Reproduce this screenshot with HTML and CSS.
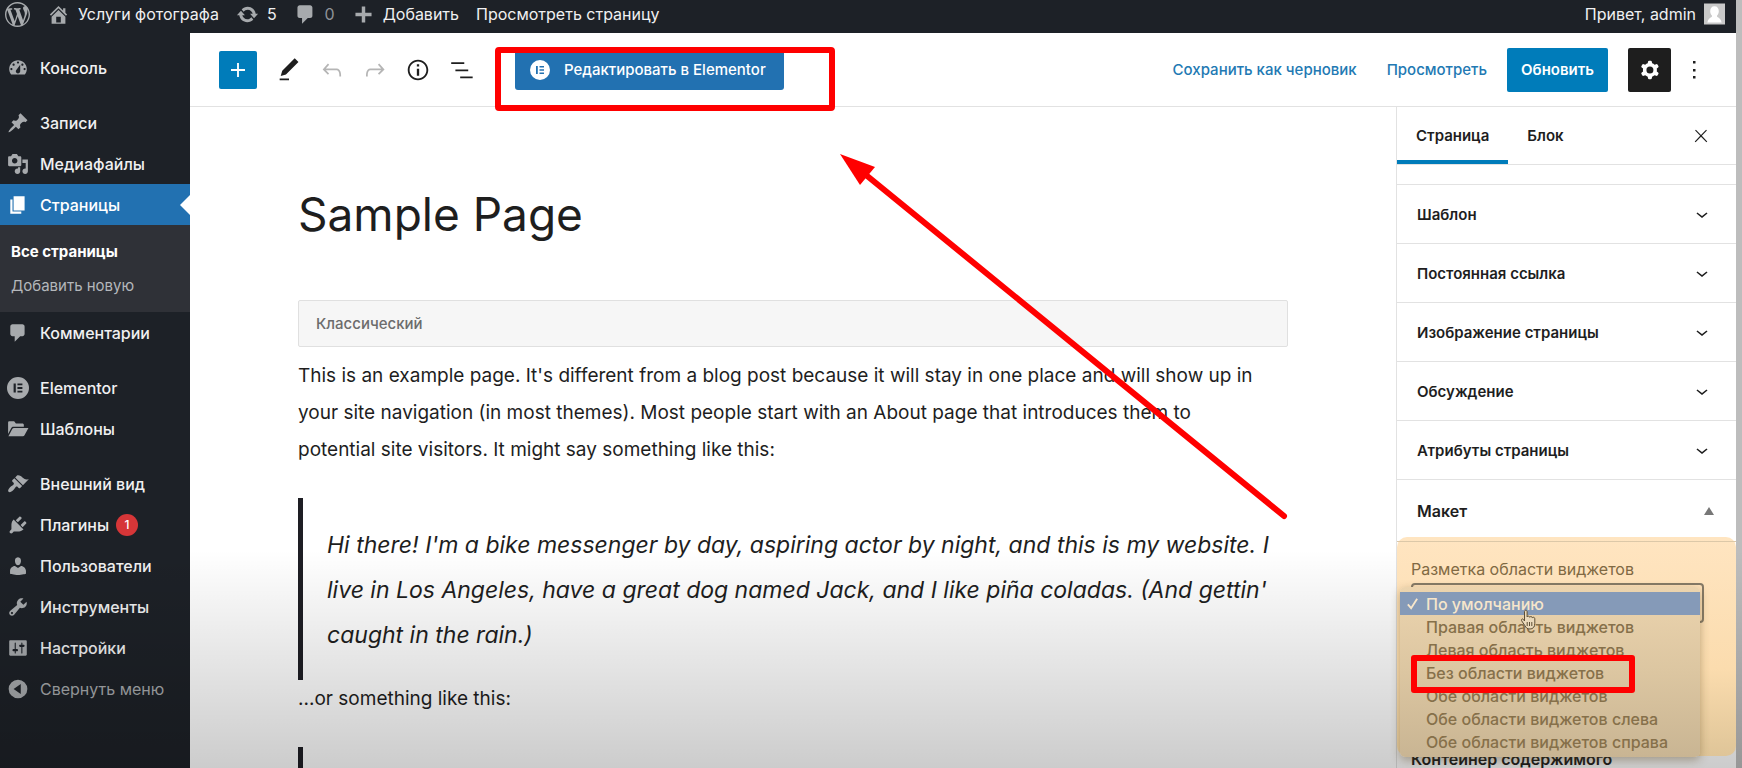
FILE: index.html
```html
<!DOCTYPE html>
<html lang="ru">
<head>
<meta charset="utf-8">
<title>Редактировать страницу</title>
<link rel="stylesheet" href="styles.css">
</head>
<body>
<div class="app">
  <header class="adminbar">
    <a class="ab-item ab-logo" href="#" aria-label="WordPress"><svg class="ico-wp" viewBox="0 0 20 20"><path d="M20 10c0-5.51-4.49-10-10-10C4.48 0 0 4.49 0 10c0 5.52 4.48 10 10 10 5.51 0 10-4.48 10-10zM7.78 15.37L4.37 6.22c.55-.02 1.17-.08 1.17-.08.5-.06.44-1.13-.06-1.11 0 0-1.45.11-2.37.11-.18 0-.37 0-.58-.01C4.12 2.69 6.87 1.11 10 1.11c2.33 0 4.45.87 6.05 2.34-.68-.11-1.65.39-1.65 1.58 0 .74.45 1.36.9 2.1.35.61.55 1.36.55 2.46 0 1.49-1.4 5-1.4 5l-3.03-8.37c.54-.02.82-.17.82-.17.5-.05.44-1.25-.06-1.22 0 0-1.44.12-2.38.12-.87 0-2.33-.12-2.33-.12-.5-.03-.56 1.2-.06 1.22l.92.08 1.26 3.41zM17.41 10c.24-.64.74-1.87.43-4.25.7 1.29 1.05 2.71 1.05 4.25 0 3.29-1.73 6.24-4.4 7.78.97-2.59 1.94-5.2 2.92-7.78zM6.1 18.09C3.12 16.65 1.11 13.53 1.11 10c0-1.3.23-2.48.72-3.59C3.25 10.3 4.67 14.2 6.1 18.09zm4.03-6.63l2.58 6.98c-.86.29-1.76.45-2.71.45-.79 0-1.57-.11-2.29-.33.81-2.38 1.62-4.74 2.42-7.1z"/></svg></a>
    <a class="ab-item" href="#"><svg viewBox="0 0 20 20"><path fill-rule="evenodd" d="M16 8.5l1.53 1.53-1.06 1.06L10 4.6l-6.47 6.49-1.06-1.06L10 2.5l4 4v-2h2v4zm-6-2.46l6 5.99V18H4v-5.97zM12 17v-5H8v5h4z"/></svg>Услуги фотографа</a>
    <a class="ab-item" href="#"><svg viewBox="0 0 20 20"><path d="M10.2 3.28c3.53 0 6.43 2.61 6.92 6h2.08l-3.5 4-3.5-4h2.32c-.45-1.97-2.21-3.45-4.32-3.45-1.45 0-2.73.71-3.54 1.78L4.95 5.66C6.23 4.2 8.11 3.28 10.2 3.28zm-.4 13.44c-3.52 0-6.43-2.61-6.92-6H.8l3.5-4c1.17 1.33 2.33 2.67 3.5 4H5.48c.45 1.97 2.21 3.45 4.32 3.45 1.45 0 2.73-.71 3.54-1.78l1.71 1.95c-1.28 1.46-3.15 2.38-5.25 2.38z"/></svg>5</a>
    <a class="ab-item ab-muted" href="#"><svg viewBox="0 0 20 20"><path d="M5 2h9c1.1 0 2 .9 2 2v7c0 1.1-.9 2-2 2h-2l-5 5v-5H5c-1.1 0-2-.9-2-2V4c0-1.1.9-2 2-2z"/></svg>0</a>
    <a class="ab-item" href="#"><svg viewBox="0 0 20 20"><path d="M17 8.500v3h-5.500V17h-3v-5.500H3v-3h5.500V3h3v5.500z"/></svg>Добавить</a>
    <a class="ab-item" href="#">Просмотреть страницу</a>
    <a class="ab-item ab-user" href="#">Привет, admin<svg class="avatar" viewBox="0 0 22 22"><path fill="#c9c9c9" d="M0 0h22v22H0z"/><path fill="#fff" d="M11 3c3 0 4.500 2.200 4.500 5 0 2-.8 3.600-1.800 4.600v1.200c2.500 1 4.300 3 4.800 6.200h-15c.5-3.200 2.300-5.200 4.800-6.200v-1.200C7.300 11.600 6.500 10 6.500 8c0-2.800 1.500-5 4.500-5z"/></svg></a>
  </header>

  <div class="body">
    <nav class="menu" aria-label="Меню">
      <a class="menu-item" href="#"><svg viewBox="0 0 20 20"><path fill-rule="evenodd" d="M3.76 16h12.48c1.1-1.37 1.76-3.11 1.76-5 0-4.42-3.58-8-8-8s-8 3.58-8 8c0 1.89.66 3.63 1.76 5zM10 4c.55 0 1 .45 1 1s-.45 1-1 1-1-.45-1-1 .45-1 1-1zM6 6c.55 0 1 .45 1 1s-.45 1-1 1-1-.45-1-1 .45-1 1-1zm8 0c.55 0 1 .45 1 1s-.45 1-1 1-1-.45-1-1 .45-1 1-1zm-5.370 5.550L12 7v6c0 1.100-.9 2-2 2s-2-.9-2-2c0-.57.24-1.080.63-1.450zM4 10c.55 0 1 .45 1 1s-.45 1-1 1-1-.45-1-1 .45-1 1-1zm12 0c.55 0 1 .45 1 1s-.45 1-1 1-1-.45-1-1 .45-1 1-1z"/></svg>Консоль</a>
      <a class="menu-item spaced" href="#"><svg viewBox="0 0 20 20"><path d="M10.44 3.02l1.82-1.82 6.36 6.35-1.83 1.82c-1.05-.68-2.48-.57-3.41.36l-.75.75c-.92.93-1.04 2.35-.35 3.41l-1.83 1.82-2.41-2.41-2.8 2.79c-.42.42-3.38 2.71-3.8 2.29s1.86-3.39 2.28-3.81l2.79-2.79L4.1 9.36l1.83-1.82c1.05.69 2.48.57 3.4-.36l.75-.75c.93-.92 1.05-2.35.36-3.41z"/></svg>Записи</a>
      <a class="menu-item" href="#"><svg viewBox="0 0 20 20"><path fill-rule="evenodd" d="M13 11V4c0-.55-.45-1-1-1h-1.670L9 1H5L3.670 3H2c-.55 0-1 .45-1 1v7c0 .55.45 1 1 1h10c.55 0 1-.45 1-1zM7 4.500c1.380 0 2.500 1.120 2.500 2.500S8.380 9.500 7 9.500 4.500 8.380 4.500 7 5.620 4.500 7 4.500zM14 6h5v10.500c0 1.380-1.120 2.500-2.500 2.500S14 17.880 14 16.500s1.120-2.500 2.500-2.500c.17 0 .34.02.5.05V9h-3V6zm-4 8.050V13h2v3.500c0 1.380-1.120 2.500-2.500 2.500S7 17.880 7 16.500 8.120 14 9.500 14c.17 0 .34.02.5.05z"/></svg>Медиафайлы</a>
      <a class="menu-item current" href="#"><svg viewBox="0 0 20 20"><path d="M6 15V2h10v13H6zm-1 1h8v2H3V5h2v11z"/></svg>Страницы</a>
      <div class="submenu">
        <a class="sub-current" href="#">Все страницы</a>
        <a href="#">Добавить новую</a>
      </div>
      <a class="menu-item" href="#"><svg viewBox="0 0 20 20"><path d="M5 2h9c1.1 0 2 .9 2 2v7c0 1.1-.9 2-2 2h-2l-5 5v-5H5c-1.1 0-2-.9-2-2V4c0-1.1.9-2 2-2z"/></svg>Комментарии</a>
      <a class="menu-item spaced" href="#"><svg viewBox="0 0 20 20"><path fill-rule="evenodd" d="M10 0a10 10 0 1 1 0 20 10 10 0 0 1 0-20zM6 6v8h2V6zm3.500 0v1.600H14V6zm0 3.200v1.600H14V9.200zm0 3.200V14H14v-1.600z"/></svg>Elementor</a>
      <a class="menu-item" href="#"><svg viewBox="0 0 20 20"><path d="M1 4.200c0-.7.5-1.200 1.200-1.200h4.300l1.600 2H14c.8 0 1.300.5 1.300 1.300V8H5.800c-.8 0-1.500.4-1.900 1.100L1 14.500zM1.300 16.500l3.600-6.700c.3-.5.800-.8 1.400-.8H19.500l-3.600 6.600c-.3.600-.8.900-1.400.9z"/></svg>Шаблоны</a>
      <a class="menu-item spaced" href="#"><svg viewBox="0 0 20 20"><path d="M14.48 11.06L7.41 3.99l1.5-1.5c.5-.56 2.3-.47 3.51.32 1.21.8 1.43 1.28 2.91 2.1 1.18.64 2.45 1.26 4.45.85zm-.71.71L6.7 4.7 4.93 6.47c-.39.39-.39 1.02 0 1.41l1.06 1.06c.39.39.39 1.03 0 1.42-.6.6-1.43 1.11-2.21 1.69-.35.26-.7.53-1.01.84C1.43 14.23.4 16.08 1.4 17.07c.99 1 2.84-.03 4.18-1.36.31-.31.58-.66.85-1.02.57-.78 1.08-1.61 1.69-2.21.39-.39 1.02-.39 1.41 0l1.06 1.06c.39.39 1.02.39 1.41 0z"/></svg>Внешний вид</a>
      <a class="menu-item" href="#"><svg viewBox="0 0 20 20"><path d="M13.11 4.36L9.87 7.6 8 5.73l3.24-3.24c.35-.34 1.05-.2 1.56.32.52.51.66 1.21.31 1.55zm-8 1.77l.91-1.12 9.01 9.01-1.19.84c-.71.71-2.63 1.16-3.82 1.16H6.14L4.9 17.26c-.59.59-1.54.59-2.12 0-.59-.58-.59-1.53 0-2.12l1.24-1.24v-3.88c0-1.13.4-3.19 1.09-3.89zm7.26 3.97l3.24-3.24c.34-.35 1.04-.21 1.55.31.52.51.66 1.21.31 1.55l-3.24 3.25z"/></svg>Плагины<span class="badge">1</span></a>
      <a class="menu-item" href="#"><svg viewBox="0 0 20 20"><path d="M10 9.25c-2.27 0-2.73-3.44-2.73-3.44C7 4.02 7.82 2 9.97 2c2.16 0 2.98 2.02 2.71 3.81 0 0-.41 3.44-2.68 3.44zm0 2.57L12.72 10c2.39 0 4.52 2.33 4.52 4.53v2.49s-3.65 1.13-7.24 1.13c-3.65 0-7.24-1.13-7.24-1.13v-2.49c0-2.25 1.94-4.48 4.47-4.48z"/></svg>Пользователи</a>
      <a class="menu-item" href="#"><svg viewBox="0 0 20 20"><path fill-rule="evenodd" d="M16.68 9.77c-1.34 1.34-3.3 1.67-4.95.99l-5.41 6.52c-.99.99-2.59.99-3.58 0s-.99-2.59 0-3.57l6.52-5.42c-.68-1.65-.35-3.61.99-4.95 1.28-1.28 3.12-1.62 4.72-1.06l-2.89 2.89 2.82 2.82 2.86-2.87c.53 1.58.18 3.39-1.08 4.65zM3.81 16.21c.4.39 1.04.39 1.43 0 .4-.4.4-1.04 0-1.43-.39-.4-1.03-.4-1.43 0-.39.39-.39 1.03 0 1.43z"/></svg>Инструменты</a>
      <a class="menu-item" href="#"><svg viewBox="0 0 20 20"><path fill-rule="evenodd" d="M18 16V4c0-.55-.45-1-1-1H3c-.55 0-1 .45-1 1v12c0 .55.45 1 1 1h14c.55 0 1-.45 1-1zM8 11h1c.55 0 1 .45 1 1s-.45 1-1 1H8v1.500c0 .28-.22.5-.5.5s-.5-.22-.5-.5V13H6c-.55 0-1-.45-1-1s.45-1 1-1h1V5.500c0-.28.22-.5.5-.5s.5.22.5.5V11zm5-2h-1c-.55 0-1-.45-1-1s.45-1 1-1h1V5.500c0-.28.22-.5.5-.5s.5.22.5.5V7h1c.55 0 1 .45 1 1s-.45 1-1 1h-1v5.500c0 .28-.22.5-.5.5s-.5-.22-.5-.5V9z"/></svg>Настройки</a>
      <button class="menu-item collapse" type="button"><svg viewBox="0 0 20 20"><path fill-rule="evenodd" d="M10 1.500a8.500 8.500 0 1 1 0 17 8.500 8.500 0 0 1 0-17zM12.500 5.500L6 10l6.500 4.500z"/></svg>Свернуть меню</button>
    </nav>

    <div class="editor">
      <div class="toolbar">
        <button class="tb-add" type="button" aria-label="Добавить блок"><svg viewBox="0 0 24 24"><path d="M18 11.200h-5.200V6h-1.600v5.200H6v1.600h5.200V18h1.600v-5.200H18z"/></svg></button>
        <button class="tb-icon" type="button" aria-label="Инструменты"><svg viewBox="0 0 24 24"><path d="M20.100 5.100L16.900 2 6.200 12.700l-1.300 4.400 4.500-1.300L20.100 5.100zM4 20.800h8v-1.500H4v1.500z"/></svg></button>
        <button class="tb-icon dim" type="button" aria-label="Отменить"><svg viewBox="0 0 24 24"><path d="M18.300 11.700c-.6-.6-1.400-.9-2.300-.9H6.700l2.900-3.300-1.100-1-4.500 5L8.500 16l1-1-2.700-2.700H16c.5 0 .9.2 1.300.5 1 1 1 3.400 1 4.500v.3h1.500v-.2c0-1.500 0-4.300-1.500-5.700z"/></svg></button>
        <button class="tb-icon dim" type="button" aria-label="Повторить"><svg viewBox="0 0 24 24"><path d="M15.600 6.500l-1.100 1 2.900 3.300H8c-.9 0-1.700.3-2.300.9-1.400 1.500-1.400 4.200-1.400 5.600v.2h1.500v-.3c0-1.100 0-3.500 1-4.500.3-.3.7-.5 1.300-.5h9.200L14.500 15l1.100 1.100 4.600-4.600-4.600-5z"/></svg></button>
        <button class="tb-icon" type="button" aria-label="Сведения"><svg viewBox="0 0 24 24"><path fill-rule="evenodd" d="M12 3.200c-4.800 0-8.800 3.900-8.800 8.800 0 4.800 3.900 8.800 8.800 8.800 4.800 0 8.800-3.900 8.800-8.800 0-4.800-4-8.800-8.800-8.800zm0 16c-4 0-7.200-3.300-7.200-7.200C4.800 8 8 4.800 12 4.800s7.200 3.300 7.200 7.200c0 4-3.200 7.200-7.200 7.200zM11 17h2v-6h-2v6zm0-8h2V7h-2v2z"/></svg></button>
        <button class="tb-icon" type="button" aria-label="Структура"><svg viewBox="0 0 24 24"><path d="M3.600 5.300h11.200v1.500H3.600zM7.200 11.500h11v1.500h-11zM11.300 17.500h10.700V19H11.300z"/></svg></button>
        <button class="tb-elementor" type="button"><svg viewBox="0 0 20 20"><path fill-rule="evenodd" d="M10 0a10 10 0 1 1 0 20 10 10 0 0 1 0-20zM6 6v8h1.800V6zm3.500 0v1.500H14V6zm0 3.250v1.500H14v-1.500zm0 3.250V14H14v-1.500z"/></svg>Редактировать в Elementor</button>
        <div class="tb-actions">
          <a class="tb-link tb-draft" href="#">Сохранить как черновик</a>
          <a class="tb-link" href="#">Просмотреть</a>
          <button class="tb-update" type="button">Обновить</button>
          <button class="tb-gear" type="button" aria-label="Настройки"><svg viewBox="0 0 24 24"><path fill-rule="evenodd" d="M10.289 4.836A1 1 0 0111.275 4h1.306a1 1 0 01.987.836l.244 1.466c.787.26 1.503.679 2.108 1.218l1.393-.522a1 1 0 011.216.437l.653 1.130a1 1 0 01-.23 1.273l-1.148.944a6.025 6.025 0 010 2.435l1.149.946a1 1 0 01.23 1.272l-.653 1.130a1 1 0 01-1.216.437l-1.394-.522c-.605.54-1.320.958-2.108 1.218l-.244 1.466a1 1 0 01-.987.836h-1.306a1 1 0 01-.986-.836l-.244-1.466a5.995 5.995 0 01-2.108-1.218l-1.394.522a1 1 0 01-1.217-.436l-.653-1.131a1 1 0 01.23-1.272l1.149-.946a6.026 6.026 0 010-2.435l-1.148-.944a1 1 0 01-.23-1.272l.653-1.131a1 1 0 011.217-.437l1.393.522a5.994 5.994 0 012.108-1.218l.244-1.466zM14.929 12a3 3 0 11-6 0 3 3 0 016 0z"/></svg></button>
          <button class="tb-dots" type="button" aria-label="Ещё"><svg viewBox="0 0 6 20"><path d="M2 1h2.500v2.500H2zM2 9h2.500v2.500H2zM2 16h2.500v2.500H2z"/></svg></button>
        </div>
      </div>

      <div class="workspace">
        <main class="canvas">
          <h1 class="title">Sample Page</h1>
          <div class="classic">Классический</div>
          <p class="para">This is an example page. It's different from a blog post because it will stay in one place and will show up in your site navigation (in most themes). Most people start with an About page that introduces them to potential site visitors. It might say something like this:</p>
          <blockquote class="quote">Hi there! I'm a bike messenger by day, aspiring actor by night, and this is my website. I live in Los Angeles, have a great dog named Jack, and I like piña coladas. (And gettin' caught in the rain.)</blockquote>
          <p class="para">...or something like this:</p>
          <blockquote class="quote"></blockquote>
        </main>

        <aside class="settings">
          <div class="tabs">
            <button class="tab active" type="button">Страница</button>
            <button class="tab" type="button">Блок</button>
            <button class="tab-close" type="button" aria-label="Закрыть"><svg viewBox="0 0 24 24"><path d="M13 11.800l6.100-6.300-1-1-6.100 6.200-6.100-6.200-1 1 6.100 6.300-6.500 6.700 1 1 6.500-6.600 6.500 6.600 1-1z"/></svg></button>
          </div>
          <div class="panels">
            <button class="panel" type="button">Шаблон<svg viewBox="0 0 24 24"><path d="M17.500 11.600L12 16l-5.500-4.400.9-1.200L12 14l4.500-3.600 1 1.200z"/></svg></button>
            <button class="panel" type="button">Постоянная ссылка<svg viewBox="0 0 24 24"><path d="M17.500 11.600L12 16l-5.500-4.400.9-1.200L12 14l4.500-3.600 1 1.200z"/></svg></button>
            <button class="panel" type="button">Изображение страницы<svg viewBox="0 0 24 24"><path d="M17.500 11.600L12 16l-5.500-4.400.9-1.200L12 14l4.500-3.600 1 1.200z"/></svg></button>
            <button class="panel" type="button">Обсуждение<svg viewBox="0 0 24 24"><path d="M17.500 11.600L12 16l-5.500-4.400.9-1.200L12 14l4.500-3.600 1 1.200z"/></svg></button>
            <button class="panel" type="button">Атрибуты страницы<svg viewBox="0 0 24 24"><path d="M17.500 11.600L12 16l-5.500-4.400.9-1.200L12 14l4.500-3.600 1 1.200z"/></svg></button>
            <button class="panel open" type="button">Макет<svg viewBox="0 0 10 8"><path d="M5 0l5 8H0z"/></svg></button>
          </div>
          <section class="layout">
            <label class="field-label" for="area">Разметка области виджетов</label>
            <select class="field-select" id="area"><option>По умолчанию</option></select>
            <ul class="options" role="listbox" aria-label="Разметка области виджетов">
              <li class="option selected" role="option" aria-selected="true"><svg viewBox="0 0 14 14"><path d="M2 8l3.500 4L12 2"/></svg>По умолчанию</li>
              <li class="option" role="option">Правая область виджетов</li>
              <li class="option" role="option">Левая область виджетов</li>
              <li class="option marked" role="option">Без области виджетов</li>
              <li class="option" role="option">Обе области виджетов</li>
              <li class="option" role="option">Обе области виджетов слева</li>
              <li class="option" role="option">Обе области виджетов справа</li>
            </ul>
            <svg class="cursor" viewBox="0 0 20 22"><path d="M5.500 12V2.800c0-2 2.600-2 2.600 0V8c.4-1.300 2.500-1.100 2.600.3.500-1.200 2.500-.9 2.600.5.600-1 2.500-.6 2.500.9v4.500c0 3.800-1.900 5.800-4.800 5.800-2.800 0-3.900-1.100-5.200-3.500L2.600 11.700c-.7-1.600 1.100-2.400 1.900-1.200z"/><path d="M8.200 13v4M10.500 13v4M12.800 13v4"/></svg>
          </section>
          <span class="field-next">Контейнер содержимого</span>
        </aside>
      </div>
    </div>
  </div>

  <div class="shade"></div>
  <div class="mark-elementor"></div>
  <svg class="arrow" viewBox="0 0 450 368"><path class="arrow-line" d="M26 21L444 362"/><path d="M0 0l35 13-15 18z"/></svg>
</div>
</body>
</html>
```
FILE: styles.css
```css
*, *::before, *::after { box-sizing: border-box; }
body {
  margin: 0;
  font-family: Inter, "Noto Sans", sans-serif;
  font-size: 15px;
  color: #1e1e1e;
  background: #bdbdbd;
}
a { color: inherit; text-decoration: none; }
button { font: inherit; color: inherit; background: none; border: 0; padding: 0; }
svg { display: block; flex: none; fill: currentColor; }

.app {
  position: relative;
  display: flex;
  flex-direction: column;
  height: 100vh;
  padding-right: 6px;
  overflow: hidden;
}

/* Admin bar */
.adminbar {
  display: flex;
  align-items: center;
  gap: 17px;
  height: 33px;
  flex: none;
  padding: 0 11px 5px 5px;
  background: #1d2127;
  color: #f0f0f1;
  font-size: 16px;
}
.ab-item { display: flex; align-items: center; gap: 8px; white-space: nowrap; }
.ab-item svg { width: 23px; height: 23px; color: #a7aaad; }
.ab-item .ico-wp { width: 25px; height: 25px; }
.ab-muted { color: #8f9398; }
.ab-user { margin-left: auto; }
.ab-item .avatar { width: 21px; height: 22px; }

.body { display: flex; flex: 1; min-height: 0; }

/* Left menu */
.menu { width: 190px; flex: none; padding-top: 14px; background: #1d2127; color: #f0f0f1; }
.menu-item {
  position: relative;
  display: flex;
  align-items: center;
  gap: 11px;
  width: 100%;
  height: 41px;
  padding-left: 7px;
  font-size: 16px;
  font-weight: 500;
}
.menu-item svg { width: 22px; height: 22px; color: #a7aaad; }
.spaced { margin-top: 14px; }
.current { background: #2271b1; color: #fff; }
.current svg { color: #fff; }
.current::after {
  content: "";
  position: absolute;
  right: 0;
  top: 11px;
  border: 10px solid transparent;
  border-left: 0;
  border-right-color: #fff;
}
.submenu { padding: 10px 12px 9px 11px; background: #2f3137; color: #b4b7bb; }
.submenu a { display: block; line-height: 34px; }
.submenu .sub-current { color: #fff; font-weight: 700; }
.badge {
  width: 22px;
  margin-left: -4px;
  border-radius: 11px;
  background: #d63638;
  color: #fff;
  font-size: 12px;
  line-height: 22px;
  text-align: center;
}
.collapse { color: #a7aaad; font-weight: 400; }

/* Editor toolbar */
.editor { display: flex; flex-direction: column; flex: 1; min-width: 0; background: #fff; }
.toolbar {
  display: flex;
  align-items: center;
  gap: 15px;
  height: 74px;
  flex: none;
  padding: 0 39px 0 29px;
  border-bottom: 1px solid #e2e2e2;
}
.toolbar svg { width: 28px; height: 28px; }
.tb-add {
  display: grid;
  place-items: center;
  width: 38px;
  height: 38px;
  margin-right: 3px;
  border-radius: 2px;
  background: #007cba;
  color: #fff;
}
.dim { color: #b5b5b5; }
.tb-elementor {
  display: flex;
  align-items: center;
  gap: 14px;
  height: 40px;
  margin-left: 25px;
  padding: 0 18px 0 15px;
  border-radius: 3px;
  background: #2271b1;
  color: #fff;
  font-weight: 500;
  white-space: nowrap;
}
.toolbar .tb-elementor svg { width: 20px; height: 20px; }
.tb-actions { display: flex; align-items: center; gap: 20px; margin-left: auto; white-space: nowrap; }
.tb-link { color: #2279b3; font-weight: 500; }
.tb-draft { margin-right: 10px; }
.tb-update { height: 44px; padding: 0 14px; border-radius: 2px; background: #007cba; color: #fff; font-weight: 600; }
.tb-gear { display: grid; place-items: center; width: 43px; height: 44px; border-radius: 2px; background: #1e1e1e; color: #fff; }
.toolbar .tb-dots svg { width: 6px; height: 20px; }

.workspace { display: flex; flex: 1; min-height: 0; }

/* Canvas */
.canvas { flex: 1; min-width: 0; padding: 73px 108px 0; overflow: hidden; }
.title { margin: 0 0 52px; font-size: 46px; font-weight: 400; line-height: 68px; }
.classic {
  height: 47px;
  padding: 0 17px;
  border: 1px solid #e0e0e0;
  border-radius: 2px;
  background: #f6f6f6;
  color: #6c6c6c;
  font-weight: 500;
  line-height: 45px;
}
.para { margin: 10px 0 0; padding-right: 20px; font-size: 19px; line-height: 37px; }
.quote {
  margin: 30px 0 0;
  padding: 25px 0 22px 24px;
  border-left: 5px solid #1e1e24;
  font-size: 23px;
  font-style: italic;
  line-height: 45px;
}
.quote + .para { margin-top: 0; }

/* Settings sidebar */
.settings { width: 340px; flex: none; border-left: 1px solid #e2e2e2; font-weight: 600; }
.tabs { display: flex; height: 58px; border-bottom: 1px solid #e2e2e2; }
.tab { padding: 0 19px; }
.tab.active { border-bottom: 4px solid #007cba; padding-top: 4px; }
.tab-close { margin-left: auto; padding-right: 25px; }
.tab-close svg { width: 20px; height: 20px; }
.panels { padding-top: 19px; }
.panel {
  display: flex;
  align-items: center;
  justify-content: space-between;
  width: 100%;
  height: 59px;
  padding: 0 22px 0 20px;
  border-top: 1px solid #e2e2e2;
}
.panel svg { width: 24px; height: 24px; }
.panel.open { height: 62px; font-size: 16px; }
.panel.open svg { width: 10px; height: 8px; color: #777; }
.layout {
  position: relative;
  z-index: 2;
  height: 219px;
  margin-top: -4px;
  padding: 18px 32px 0 14px;
  border-radius: 10px;
  background: linear-gradient(#ffe5c1, #fbdcae 60%, #dfc598);
}
.layout::before {
  content: "";
  position: absolute;
  inset: 4px 0 auto;
  height: 1px;
  background: #dcc8a8;
}
.field-label { display: block; color: #806943; font-size: 16px; font-weight: 400; line-height: 28px; }
.field-select {
  display: block;
  width: 100%;
  height: 40px;
  border: 2px solid #857a67;
  border-radius: 4px;
  background: transparent;
}
.options {
  position: absolute;
  top: 50px;
  left: 3px;
  right: 36px;
  margin: 0;
  padding: 5px 0 4px;
  border-radius: 5px;
  background: linear-gradient(#ecd4ae, #dcc6a1 50%, #c9b593);
  box-shadow: 0 3px 10px rgba(90, 70, 30, 0.4);
  color: #86704a;
  font-size: 16px;
  font-weight: 500;
  list-style: none;
}
.option { position: relative; height: 23px; padding-left: 26px; line-height: 24px; white-space: nowrap; }
.option.selected { background: #859ab8; color: #f7e6cb; }
.option svg { position: absolute; left: 6px; top: 5px; width: 13px; height: 13px; fill: none; stroke: currentColor; stroke-width: 2; }
.option.marked::after {
  content: "";
  position: absolute;
  z-index: 3;
  left: 11px;
  top: -6px;
  width: 224px;
  height: 38px;
  border: 6px solid #f00;
  border-radius: 3px;
}
.cursor { position: absolute; left: 122px; top: 72px; width: 20px; height: 22px; fill: #ead9bb; stroke: #5e4f35; stroke-width: 1; }
.field-next { display: block; margin-top: -6px; padding-left: 14px; font-size: 16px; line-height: 18px; }

/* Video shade and annotations */
.shade {
  position: absolute;
  inset: auto 0 0;
  height: 218px;
  background: linear-gradient(transparent, rgba(0, 0, 0, 0.2));
  pointer-events: none;
}
.mark-elementor {
  position: absolute;
  left: 495px;
  top: 47px;
  width: 340px;
  height: 64px;
  border: 6px solid #f00;
  border-radius: 4px;
}
.arrow { position: absolute; left: 840px; top: 154px; width: 450px; height: 368px; fill: #f00; pointer-events: none; }
.arrow-line { fill: none; stroke: #f00; stroke-width: 6; stroke-linecap: round; }
```
